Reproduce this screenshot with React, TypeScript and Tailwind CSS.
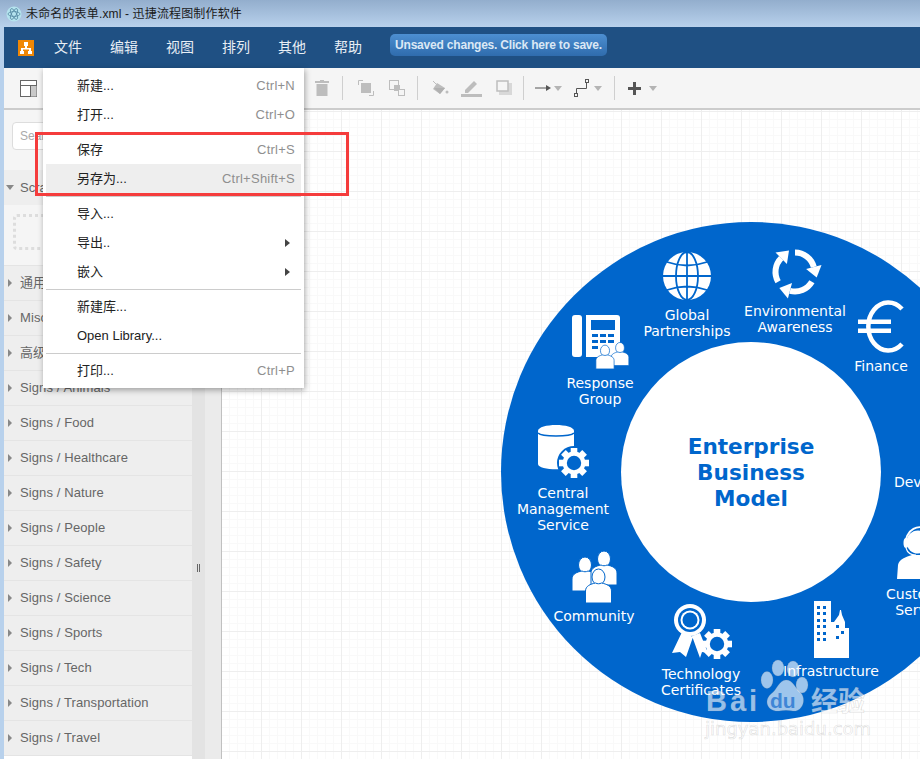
import React from 'react';

const sidebarRows = [
  '通用',
  'Misc',
  '高级',
  'Signs / Animals',
  'Signs / Food',
  'Signs / Healthcare',
  'Signs / Nature',
  'Signs / People',
  'Signs / Safety',
  'Signs / Science',
  'Signs / Sports',
  'Signs / Tech',
  'Signs / Transportation',
  'Signs / Travel',
];

const topMenus = ['文件', '编辑', '视图', '排列', '其他', '帮助'];

const Caret = ({ className = '' }: { className?: string }) => (
  <svg width="8" height="5" viewBox="0 0 8 5" className={className}>
    <path d="M0 0h8L4 5z" fill="#b4b4b4" />
  </svg>
);

const MenuRow = ({ label, shortcut, arrow, active }: { label: string; shortcut?: string; arrow?: boolean; active?: boolean }) => (
  <div className={`h-[29px] flex items-center justify-between pl-[31px] pr-[6px] ${active ? 'bg-[#eeeeee]' : ''}`}>
    <span className="text-[13px] text-[#222222]">{label}</span>
    {shortcut && <span className="text-[13px] tracking-[0.25px] text-[#8f8f8f]">{shortcut}</span>}
    {arrow && (
      <svg width="5" height="8" viewBox="0 0 5 8" className="mr-[5px]">
        <path d="M0 0l5 4-5 4z" fill="#444444" />
      </svg>
    )}
  </div>
);

const MenuSep = () => (
  <div className="h-[6px] flex items-center">
    <div className="h-px w-full bg-[#cccccc]" />
  </div>
);

const Gear = ({ x, y, r }: { x: number; y: number; r: number }) => (
  <g>
    {[0, 45, 90, 135].map((a) => (
      <rect key={a} x={x - r * 0.22} y={y - r} width={r * 0.44} height={r * 2} fill="#fff" transform={`rotate(${a} ${x} ${y})`} />
    ))}
    <circle cx={x} cy={y} r={r * 0.76} fill="#fff" />
    <circle cx={x} cy={y} r={r * 0.48} fill="#0066cc" />
  </g>
);

const Person = ({ x, y, s = 1 }: { x: number; y: number; s?: number }) => (
  <g transform={`translate(${x} ${y}) scale(${s})`}>
    <ellipse cx="0" cy="-9" rx="6.5" ry="8" fill="#fff" stroke="#0066cc" strokeWidth="1" />
    <path d="M-13 17v-12c0-5 5-7 10-8 2 1 4 1 6 0 5 1 10 3 10 8v12z" fill="#fff" stroke="#0066cc" strokeWidth="1" />
  </g>
);

const Diagram = () => (
  <svg viewBox="222 110 698 649" className="absolute left-0 top-0 w-[698px] h-[649px]">
    <circle cx="751" cy="472" r="250" fill="#0066cc" />
    <circle cx="751" cy="472" r="130" fill="#ffffff" />

    <g fontFamily="'DejaVu Sans', sans-serif" fontSize="14" fill="#ffffff" textAnchor="middle">
      <text x="687" y="320">Global</text>
      <text x="687" y="336">Partnerships</text>
      <text x="795" y="316">Environmental</text>
      <text x="795" y="332">Awareness</text>
      <text x="881" y="371">Finance</text>
      <text x="600" y="388">Response</text>
      <text x="600" y="404">Group</text>
      <text x="563" y="498">Central</text>
      <text x="563" y="514">Management</text>
      <text x="563" y="530">Service</text>
      <text x="594" y="621">Community</text>
      <text x="701" y="679">Technology</text>
      <text x="701" y="695">Certificates</text>
      <text x="831" y="676">Infrastructure</text>
      <text x="941" y="487">Development</text>
      <text x="920" y="599">Customer</text>
      <text x="921" y="615">Service</text>
    </g>
    <g fontFamily="'DejaVu Sans', sans-serif" fontSize="21.6" fontWeight="700" fill="#0066cc" textAnchor="middle">
      <text x="751" y="454">Enterprise</text>
      <text x="751" y="480">Business</text>
      <text x="751" y="506">Model</text>
    </g>

    {/* globe */}
    <circle cx="687" cy="276" r="24" fill="#fff" />
    <g fill="none" stroke="#0066cc" strokeWidth="1.8">
      <ellipse cx="687" cy="276" rx="11" ry="24" />
      <path d="M687 252v48M663 276h48M667 262q20 7 40 0M667 290q20-7 40 0" />
    </g>

    {/* recycle arrows */}
    <g fill="none" stroke="#fff" strokeWidth="6">
      <path d="M795 252.500A19.500 19.500 0 0 1 813.800 267" />
      <path d="M811.900 281.750A19.500 19.500 0 0 1 790 290.800" />
      <path d="M778.100 281.750A19.500 19.500 0 0 1 781.200 258.200" />
    </g>
    <g fill="#fff">
      <path d="M821.500 264.900L806.100 269.100 816.700 277.600z" />
      <path d="M787.900 298.500L792 283.100 779.300 288z" />
      <path d="M775.500 252.500L786.900 263.900 789 250.400z" />
    </g>

    {/* euro */}
    <path d="M902 309A20 24 0 1 0 902 344" fill="none" stroke="#fff" strokeWidth="4.500" />
    <path d="M858 319.500h33v4.500h-33zM858 328.500h33v4.500h-33z" fill="#fff" />

    {/* phone */}
    <rect x="572" y="315" width="10" height="42" rx="3" fill="#fff" />
    <path d="M586 315h31a3 3 0 0 1 3 3v39h-34z" fill="#fff" />
    <rect x="591" y="320" width="24" height="10" fill="#0066cc" />
    <path d="M592 334h6v3h-6zM600 334h6v3h-6zM608 334h6v3h-6zM592 340h6v3h-6zM600 340h6v3h-6zM608 340h6v3h-6zM592 346h6v3h-6z" fill="#0066cc" />
    <Person x={620} y={354} s={0.68} />
    <Person x={605} y={357} s={0.7} />

    {/* database with gear */}
    <path d="M538 431c0-8 36-8 36 0v33c0 7-36 7-36 0z" fill="#fff" />
    <path d="M538 433c4 4 32 4 36 0" fill="none" stroke="#0066cc" strokeWidth="1.500" />
    <circle cx="574" cy="463" r="17" fill="#0066cc" />
    <Gear x={574} y={463} r={15} />

    {/* community */}
    <Person x={585} y={574} />
    <Person x={604} y={568} />
    <Person x={598.5} y={586} />

    {/* award */}
    <path d="M682 632l-10 21 8-1 6 5 7-20zM692 636l8 22 2-6 6 1-8-20z" fill="#fff" />
    <circle cx="690" cy="620" r="16" fill="#fff" />
    <circle cx="690" cy="620" r="12" fill="#0066cc" />
    <circle cx="690" cy="620" r="9.500" fill="#fff" />
    <circle cx="690" cy="620" r="7.500" fill="#0066cc" />
    <Gear x={717} y={644} r={15} />

    {/* buildings */}
    <path d="M814 601h17v21h3l5-7 1-5h1l1 5 3 7v6h4v30h-35z" fill="#fff" />
    <g fill="#0066cc">
      <path d="M817 606h3v3h-3zM823 606h3v3h-3zM817 612h3v3h-3zM823 612h3v3h-3zM817 619h3v3h-3zM823 619h3v3h-3zM817 625h3v3h-3zM823 625h3v3h-3zM817 632h3v3h-3zM823 632h3v3h-3zM817 638h3v3h-3zM823 638h3v3h-3zM836 625h3v3h-3zM841 631h3v3h-3zM836 636h3v3h-3z" />
    </g>

    {/* headset person */}
    <circle cx="918" cy="542" r="11.500" fill="#fff" />
    <path d="M906 545a14 15 0 0 1 24-13" fill="none" stroke="#fff" strokeWidth="1.800" />
    <ellipse cx="906" cy="543" rx="2.500" ry="5" fill="#fff" />
    <path d="M906 548q2 7 10 7" fill="none" stroke="#fff" strokeWidth="1.200" />
    <path d="M897 579l1-14c1-6 8-8 14-10h10v24z" fill="#fff" />

    {/* watermark */}
    <g fill="#ffffff" fillOpacity="0.62" stroke="#8f8f8f" strokeOpacity="0.3" strokeWidth="0.6">
      <ellipse cx="767" cy="680" rx="6" ry="8.500" />
      <ellipse cx="778" cy="668" rx="6" ry="8" />
      <ellipse cx="793" cy="669" rx="6" ry="8" />
      <ellipse cx="802" cy="685" rx="6" ry="8" />
      <path d="M786 680c7 0 9 8 14 12 7 6 3 20-7 19-5-1-9-1-14 0-11 1-16-10-8-17 6-4 8-14 15-14z" />
      <text x="706" y="711" fontFamily="'Liberation Sans', sans-serif" fontWeight="700" fontSize="29" letterSpacing="3">Bai</text>
      <text x="811" y="711" fontFamily="'Noto Sans CJK SC', sans-serif" fontWeight="700" fontSize="27">经验</text>
      <text x="705" y="735" fontFamily="'DejaVu Sans', sans-serif" fontSize="18">jingyan.baidu.com</text>
    </g>
    <text x="770" y="708" fontFamily="'Liberation Sans', sans-serif" fontWeight="700" fontSize="21" fill="#3f86d6">du</text>
  </svg>
);

const App = () => {
  return (
    <div className="relative w-[920px] h-[759px] overflow-hidden bg-[#b8d1ec] font-['Liberation_Sans','Noto_Sans_CJK_SC',sans-serif]">
      {/* Title bar */}
      <div className="h-[27px] flex items-center pl-[6px] bg-gradient-to-b from-[#93aecd] to-[#b8d1ec]">
        <svg width="16" height="16" viewBox="0 0 16 16">
          <circle cx="8" cy="8" r="7.500" fill="#b5e3ee" />
          <g fill="none" stroke="#4b7f9a" strokeWidth="0.700">
            <ellipse cx="8" cy="8" rx="6" ry="2.400" />
            <ellipse cx="8" cy="8" rx="6" ry="2.400" transform="rotate(60 8 8)" />
            <ellipse cx="8" cy="8" rx="6" ry="2.400" transform="rotate(120 8 8)" />
          </g>
        </svg>
        <span className="ml-[4px] text-[12px] tracking-[0.15px] text-[#1a1a1a]">未命名的表单.xml - 迅捷流程图制作软件</span>
      </div>

      <div className="ml-[4px] h-[732px] flex flex-col">
        {/* Header */}
        <div className="h-[41px] bg-[#1f5083] flex items-center">
          <div className="ml-[14px] w-[16px] h-[16px] bg-[#f08705] flex items-center justify-center">
            <svg width="14" height="14" viewBox="0 0 14 14">
              <path d="M5 1h4v4h-1v2h4v3h1v3H9v-3h1V8.500H4V10h1v3H1v-3h1V7h4V5H5z" fill="#ffffff" />
            </svg>
          </div>
          <div className="ml-[6px] flex">
            {topMenus.map((m) => (
              <span key={m} className="px-[14px] text-[14px] text-[#e8eef5]">{m}</span>
            ))}
          </div>
          <button className="ml-[14px] self-start mt-[7px] w-[217px] h-[22px] rounded-[5px] bg-gradient-to-b from-[#4d8fd1] to-[#2f6cad] text-[12px] font-bold tracking-[-0.2px] text-[#dbe8f5] text-center">
            Unsaved changes. Click here to save.
          </button>
        </div>

        {/* Toolbar */}
        <div className="h-[42px] bg-[#f5f5f5] border-b-2 border-[#cccccc] flex items-center">
          <svg width="17" height="17" viewBox="0 0 17 17" className="ml-[16px]">
            <rect x="0.500" y="0.500" width="16" height="16" fill="#ffffff" stroke="#666666" />
            <path d="M0 5.500h17" stroke="#666666" />
            <path d="M10.500 6v11" stroke="#666666" />
            <rect x="11" y="6" width="5.500" height="10.500" fill="#c9c9c9" />
          </svg>
          <svg width="14" height="16" viewBox="0 0 14 16" className="ml-[278px]">
            <path d="M5 0h4v1h5v2H0V1h5zM1.500 4h11v12h-11z" fill="#bdbdbd" />
          </svg>
          <div className="ml-[13px] w-px h-[24px] bg-[#cfcfcf]" />
          <svg width="16" height="16" viewBox="0 0 16 16" className="ml-[15px]">
            <path d="M.5 5V.5H5M11 15.500h4.500V11" fill="none" stroke="#bdbdbd" />
            <rect x="3" y="3" width="10" height="10" fill="#bdbdbd" />
          </svg>
          <svg width="16" height="16" viewBox="0 0 16 16" className="ml-[15px]">
            <rect x="0.500" y="0.500" width="9" height="9" fill="#f5f5f5" stroke="#bdbdbd" />
            <rect x="5" y="5" width="6" height="6" fill="#bdbdbd" />
            <rect x="9.500" y="9.500" width="6" height="6" fill="#f5f5f5" stroke="#bdbdbd" />
          </svg>
          <div className="ml-[12px] w-px h-[24px] bg-[#cfcfcf]" />
          <svg width="17" height="17" viewBox="0 0 17 17" className="ml-[14px]">
            <path d="M1 1l4 4" stroke="#bdbdbd" />
            <path d="M5 3l8 5-5 6-7-5z" fill="#bdbdbd" />
            <path d="M2 8h11l-5 6z" fill="#b0b0b0" />
            <circle cx="15" cy="12" r="1.500" fill="#bdbdbd" />
          </svg>
          <svg width="21" height="18" viewBox="0 0 21 18" className="ml-[12px]">
            <path d="M4 11L13 2l3 3-9 9H4z" fill="#bdbdbd" />
            <rect x="0" y="15" width="21" height="3" fill="#bdbdbd" />
          </svg>
          <svg width="16" height="16" viewBox="0 0 16 16" className="ml-[14px]">
            <rect x="3" y="3" width="13" height="12" fill="#d8d8d8" />
            <rect x="1" y="1" width="11" height="10" fill="#f5f5f5" stroke="#bdbdbd" strokeWidth="1.500" />
          </svg>
          <div className="ml-[11px] w-px h-[24px] bg-[#cfcfcf]" />
          <svg width="16" height="8" viewBox="0 0 16 8" className="ml-[11px]">
            <path d="M0 4h14" stroke="#555555" />
            <path d="M11 1l5 3-5 3z" fill="#555555" />
          </svg>
          <Caret className="ml-[3px]" />
          <svg width="15" height="18" viewBox="0 0 15 18" className="ml-[12px]">
            <path d="M2.500 15V9.500h10V3" fill="none" stroke="#555555" />
            <rect x="0.500" y="14.500" width="3" height="3" fill="#f5f5f5" stroke="#555555" />
            <rect x="11.500" y="0.500" width="3" height="3" fill="#f5f5f5" stroke="#555555" />
          </svg>
          <Caret className="ml-[5px]" />
          <div className="ml-[12px] w-px h-[24px] bg-[#cfcfcf]" />
          <svg width="13" height="13" viewBox="0 0 13 13" className="ml-[13px]">
            <path d="M5 0h3v5h5v3H8v5H5V8H0V5h5z" fill="#555555" />
          </svg>
          <Caret className="ml-[8px]" />
        </div>

        <div className="flex-1 flex min-h-0">
          {/* Left panel */}
          <aside className="w-[188px] bg-white flex flex-col">
            <div className="h-[60px] bg-[#f5f5f5] pl-[8px] pr-[6px] pt-[12px]">
              <div className="w-full h-[28px] bg-white border border-[#dddddd] rounded-[4px] flex items-center pl-[7px] text-[12px] text-[#aaaaaa]">Search</div>
            </div>
            <div className="h-[35px] bg-[#eeeeee] flex items-center pl-[2px] text-[13px] text-[#666666]">
              <svg width="8" height="5" viewBox="0 0 8 5"><path d="M0 0h8L4 5z" fill="#888888" /></svg>
              <span className="ml-[6px]">Scratchpad</span>
            </div>
            <div className="h-[61px] bg-[#f5f5f5] border-b border-[#e4e4e4] pl-[9px] pt-[9px]">
              <div className="w-[40px] h-[36px] border-[3px] border-dotted border-[#dddddd] rounded-[4px]" />
            </div>
            {sidebarRows.map((r) => (
              <div key={r} className="h-[35px] shrink-0 bg-[#eeeeee] border-b border-[#e4e4e4] flex items-center pl-[4px] text-[13px] tracking-[0.1px] text-[#666666]">
                <svg width="4" height="8" viewBox="0 0 4 8"><path d="M0 0l4 4-4 4z" fill="#888888" /></svg>
                <span className="ml-[8px] whitespace-nowrap">{r}</span>
              </div>
            ))}
          </aside>
          <div className="w-[13px] bg-[#e3e3e3] flex justify-center pt-[454px]">
            <div className="w-[3px] h-[8px] border-x border-[#666666]" />
          </div>
          <div className="w-[17px] bg-[#ebebeb] border-r border-[#c0c0c0]" />

          {/* Canvas */}
          <main className="relative flex-1 bg-white bg-[linear-gradient(#eeeeee_1px,transparent_1px),linear-gradient(90deg,#eeeeee_1px,transparent_1px),linear-gradient(#f9f9f9_1px,transparent_1px),linear-gradient(90deg,#f9f9f9_1px,transparent_1px)] bg-[size:40px_40px,40px_40px,8px_8px,8px_8px] bg-[position:-1px_1px]">
            <Diagram />
          </main>
        </div>
      </div>

      {/* File menu */}
      <div className="absolute left-[43px] top-[68px] w-[261px] h-[320px] bg-white py-[3px] px-[3px] shadow-[1px_2px_6px_rgba(0,0,0,0.35)]">
        <MenuRow label="新建..." shortcut="Ctrl+N" />
        <MenuRow label="打开..." shortcut="Ctrl+O" />
        <MenuSep />
        <MenuRow label="保存" shortcut="Ctrl+S" />
        <MenuRow label="另存为..." shortcut="Ctrl+Shift+S" active />
        <MenuSep />
        <MenuRow label="导入..." />
        <MenuRow label="导出.." arrow />
        <MenuRow label="嵌入" arrow />
        <MenuSep />
        <MenuRow label="新建库..." />
        <MenuRow label="Open Library..." />
        <MenuSep />
        <MenuRow label="打印..." shortcut="Ctrl+P" />
      </div>

      {/* Red annotation */}
      <div className="absolute left-[35px] top-[132px] w-[314px] h-[64px] border-[3px] border-[#f53c3c]" />
    </div>
  );
};

export default App;
